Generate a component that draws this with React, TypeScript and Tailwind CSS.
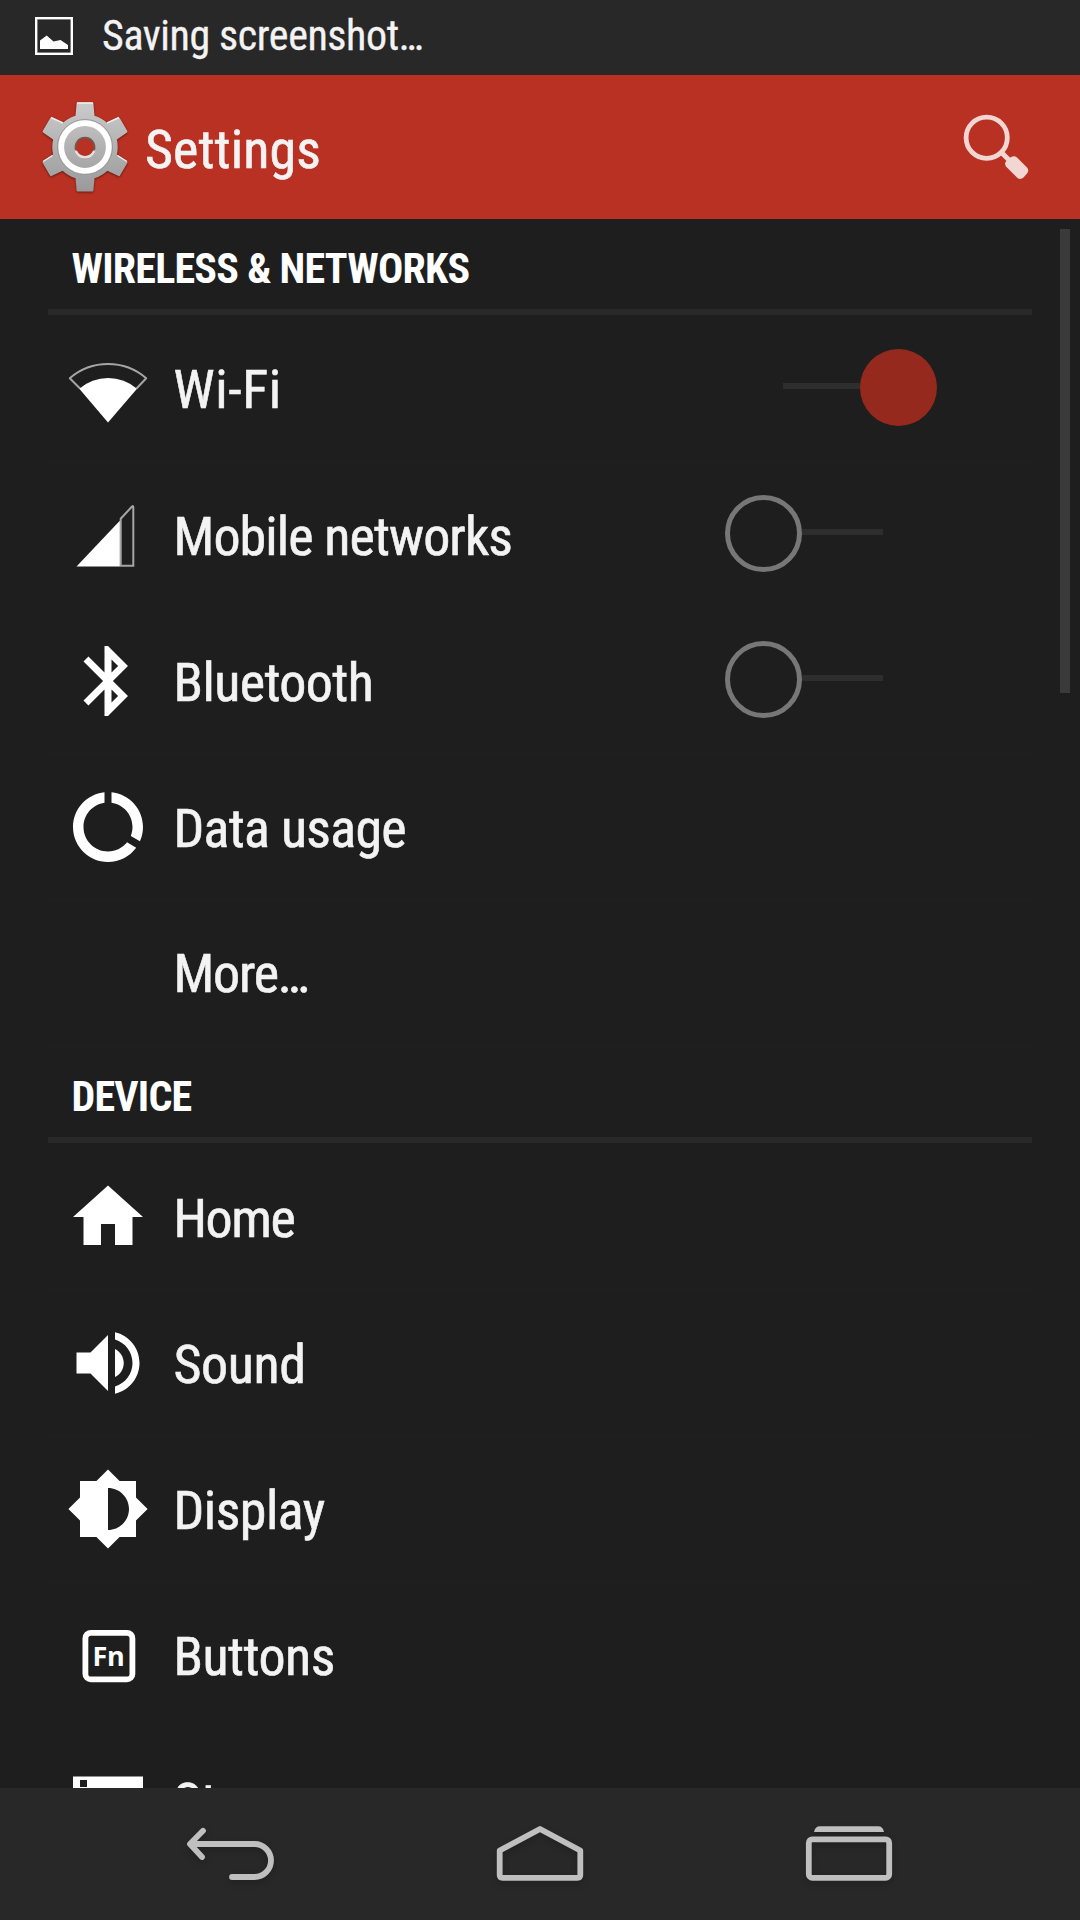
import type { ReactNode } from "react";

type Item = {
  label: string;
  className?: string;
  icon?: ReactNode;
  toggle?: "on" | "off";
};

const MaterialIcon = ({ d }: { d: string }) => (
  <svg viewBox="0 0 24 24" className="w-[84px] h-[84px]" fill="#fff">
    <path d={d} />
  </svg>
);

const WifiIcon = () => (
  <svg viewBox="0 0 84 84" className="w-[84px] h-[84px]">
    <path d="M14 41.5 L3.8 31.3 A58.5 58.5 0 0 1 80.2 31.3 L70.5 41.5" fill="none" stroke="#a5a5a5" strokeWidth="2" strokeLinejoin="round" />
    <path d="M42 75.5 L13.3 41.7 A44 44 0 0 1 71 41.7 Z" fill="#fff" />
  </svg>
);

const SignalIcon = () => (
  <svg viewBox="0 0 84 84" className="w-[84px] h-[84px]">
    <path d="M54.7 72.7 V25.7 L66 13.5 Q67.3 12.5 67.3 14 V72.7 Z" fill="none" stroke="#a5a5a5" strokeWidth="2" />
    <path d="M10.5 73.5 L53.8 27.8 V73.5 Z" fill="#fff" />
  </svg>
);

const FnIcon = () => (
  <svg viewBox="0 0 84 84" className="w-[84px] h-[84px]">
    <rect x="19.4" y="19.8" width="47" height="46.6" rx="5.5" fill="none" stroke="#fff" strokeWidth="5.8" />
    <text x="26.6" y="53" fill="#fff" className="font-['Open_Sans',sans-serif] font-bold font-stretch-normal text-[27px] tracking-[-0.5px]">Fn</text>
  </svg>
);

const wireless: Item[] = [
  { label: "Wi-Fi", icon: <WifiIcon />, toggle: "on", className: "mt-[41px] tracking-[0.6px]" },
  { label: "Mobile networks", icon: <SignalIcon />, toggle: "off", className: "mt-[42px] tracking-[-0.9px]" },
  {
    label: "Bluetooth",
    icon: <MaterialIcon d="M17.71 7.71L12 2h-1v7.59L6.41 5 5 6.41 10.59 12 5 17.59 6.41 19 11 14.41V22h1l5.71-5.71-4.3-4.29 4.3-4.29zM13 5.83l1.88 1.88L13 9.59V5.83zm1.88 10.46L13 18.17v-3.76l1.88 1.88z" />,
    toggle: "off",
    className: "mt-[42px] tracking-[-0.6px]",
  },
  {
    label: "Data usage",
    icon: <MaterialIcon d="M13 2.05v3.03c3.39.49 6 3.39 6 6.92 0 .9-.18 1.75-.48 2.54l2.6 1.53c.56-1.24.88-2.62.88-4.07 0-5.18-3.95-9.45-9-9.95zM12 19c-3.87 0-7-3.13-7-7 0-3.53 2.61-6.43 6-6.92V2.05c-5.06.5-9 4.76-9 9.95 0 5.52 4.47 10 9.99 10 3.31 0 6.24-1.61 8.06-4.09l-2.6-1.53C16.17 17.98 14.21 19 12 19z" />,
    className: "mt-[42px] tracking-[-0.7px]",
  },
  { label: "More…", className: "mt-[41px] tracking-[-1.2px]" },
];

const device: Item[] = [
  { label: "Home", icon: <MaterialIcon d="M10 20v-6h4v6h5v-8h3L12 3 2 12h3v8z" />, className: "mt-[42px] tracking-[-1.4px]" },
  {
    label: "Sound",
    icon: <MaterialIcon d="M3 9v6h4l5 5V4L7 9H3zm13.5 3c0-1.77-1.02-3.29-2.5-4.03v8.05c1.48-.73 2.5-2.25 2.5-4.02zM14 3.23v2.06c2.89.86 5 3.54 5 6.71s-2.11 5.85-5 6.71v2.06c4.01-.91 7-4.49 7-8.77s-2.99-7.86-7-8.77z" />,
    className: "mt-[42px] tracking-[-0.4px]",
  },
  {
    label: "Display",
    icon: <MaterialIcon d="M20 15.31L23.31 12 20 8.69V4h-4.69L12 .69 8.69 4H4v4.69L.69 12 4 15.31V20h4.69L12 23.31 15.31 20H20v-4.69zM12 18V6c3.31 0 6 2.69 6 6s-2.69 6-6 6z" />,
    className: "mt-[42px] tracking-[-0.5px]",
  },
  { label: "Buttons", icon: <FnIcon />, className: "mt-[42px] tracking-[-0.5px]" },
  {
    label: "Storage",
    icon: <MaterialIcon d="M2 21h20v-4H2v4zm2-3h2v2H4v-2zM2 5v4h20V5H2zm4 3H4V6h2v2zm-4 7h20v-4H2v4zm2-3h2v2H4v-2z" />,
    className: "mt-[42px] tracking-[-0.5px]",
  },
];

const Toggle = ({ state }: { state: "on" | "off" }) =>
  state === "on" ? (
    <div className="flex items-start mt-8 mr-[95px]">
      <div className="w-[77px] h-1.5 mt-[34px] bg-[#2e2e2e]" />
      <div className="w-[77px] h-[77px] rounded-full bg-[#96291d]" />
    </div>
  ) : (
    <div className="flex items-start mt-8 mr-[149px]">
      <div className="w-[77px] h-[77px] rounded-full border-[5px] border-[#777777]" />
      <div className="w-[81px] h-1.5 mt-[34px] bg-[#2e2e2e]" />
    </div>
  );

const Row = ({ item }: { item: Item }) => (
  <div className="flex h-[146px] border-b-2 border-[#1f1f1f] pl-[18px]">
    <div className="w-[84px] mt-[30px] shrink-0">{item.icon}</div>
    <span className={`flex-1 ml-[23.5px] text-[54px] leading-[64px] text-[#f3f3f3] whitespace-nowrap [-webkit-text-stroke:0.6px_#f3f3f3] ${item.className ?? ""}`}>
      {item.label}
    </span>
    {item.toggle && <Toggle state={item.toggle} />}
  </div>
);

const Section = ({ title, items }: { title: string; items: Item[] }) => (
  <section className="mx-12">
    <div className="h-[98px] pb-0.5">
      <h2 className="h-full border-b-[6px] border-[#292929] pl-[23.5px] pt-[25px] text-[42px] leading-[50px] font-bold tracking-[-0.75px] text-white">{title}</h2>
    </div>
    {items.map((item) => (
      <Row key={item.label} item={item} />
    ))}
  </section>
);

const GearIcon = () => (
  <svg viewBox="-45 -48 90 96" className="w-[90px] h-24">
    <defs>
      <linearGradient id="metal" gradientUnits="userSpaceOnUse" x1="0" y1="-45" x2="0" y2="45">
        <stop offset="0" stopColor="#cbcbcb" />
        <stop offset="1" stopColor="#999999" />
      </linearGradient>
      <mask id="hole">
        <rect x="-48" y="-48" width="96" height="96" fill="#fff" />
        <circle r="9.5" fill="#000" />
      </mask>
      <clipPath id="teeth">
        {[0, 60, 120, 180, 240, 300].map((a) => (
          <path key={a} transform={`rotate(${a})`} d="M-9.6 -30 L-8.4 -43.6 Q-8.3 -44.6 -7.3 -44.6 H7.3 Q8.3 -44.6 8.4 -43.6 L9.6 -30 V0 H-9.6 Z" />
        ))}
        <circle r="32.7" />
      </clipPath>
    </defs>
    <g mask="url(#hole)" style={{ filter: "drop-shadow(0 1px 1px rgba(0,0,0,.45))" }}>
      <rect x="-48" y="-48" width="96" height="96" fill="url(#metal)" clipPath="url(#teeth)" />
      <g stroke="#f2f2f2" strokeWidth="1.4" fill="none">
        <path d="M-8 -44 H8 M-34 -29.5 L-22 -24 M22 -24 L34 -29.5 M-42 14.5 L-32.5 8.5 M32.5 8.5 L42 14.5" />
      </g>
      <circle r="27.5" fill="none" stroke="#999" strokeWidth="1" />
      <circle r="23.8" fill="none" stroke="#fff" strokeWidth="5.8" />
    </g>
    <path d="M-9.2 4 A10 10 0 0 0 9.2 4" fill="none" stroke="#e2e2e2" strokeWidth="2.4" />
    <path d="M-9.2 3 A9.6 9.6 0 1 1 9.2 3" fill="none" stroke="#6b5a55" strokeWidth="1.6" />
  </svg>
);

const SearchIcon = () => (
  <svg viewBox="0 0 72 72" className="w-[72px] h-[72px]">
    <circle cx="26.7" cy="26.7" r="20.6" fill="none" stroke="#f1d6d3" strokeWidth="4.8" />
    <path d="M41 41 L50 50" stroke="#f1d6d3" strokeWidth="5" />
    <path d="M45.5 51 L51 46 Q54.5 44.5 57 46.5 L67 56.5 Q69.5 59.5 67 62.5 L63.5 66.5 Q60.5 69 57.5 67 L46 55.5 Q44.5 53 45.5 51 Z" fill="#f1d6d3" />
  </svg>
);

const NavIcon = ({ children }: { children: ReactNode }) => (
  <svg
    viewBox="0 0 96 66"
    className="w-24 h-[66px] drop-shadow-[0_3px_3px_rgba(0,0,0,0.2)]"
    fill="none"
    stroke="#bfbfbf"
    strokeWidth="5.8"
    strokeLinecap="round"
    strokeLinejoin="round"
  >
    {children}
  </svg>
);

const NavBar = () => (
  <nav className="h-[132px] shrink-0 bg-[#282828] flex items-center justify-center gap-[213px]">
    <NavIcon>
      <path d="M8 23 H71.5 A16.5 16.5 0 0 1 71.5 56 H49" />
      <path d="M20 9.8 L7 23 L19 36" />
    </NavIcon>
    <NavIcon>
      <path d="M7.7 29.5 L48 8 L88.3 29.5 V54 Q88.3 56.8 85.5 56.8 H10.5 Q7.7 56.8 7.7 54 Z" />
    </NavIcon>
    <NavIcon>
      <path d="M13 11 Q14 5.3 19 5.3 H77 Q82 5.3 83 11 Z" fill="#bfbfbf" stroke="none" />
      <rect x="7.8" y="18.4" width="80.4" height="38.4" rx="3.5" />
    </NavIcon>
  </nav>
);

const App = () => {
  return (
    <div className="w-[1080px] h-[1920px] flex flex-col overflow-hidden bg-[#1e1e1e] font-['Roboto_Condensed','Roboto',sans-serif] font-stretch-condensed">
      <div className="h-[75px] shrink-0 bg-[#282828] flex">
        <svg viewBox="0 0 38 38" className="w-[38px] h-[38px] ml-[35px] mt-[17px]">
          <rect x="1.2" y="1.2" width="35.6" height="35.6" fill="none" stroke="#fff" strokeWidth="2.4" />
          <path d="M5 32 V23.5 L11.7 18.5 L18.5 24.5 L25.5 23 L33 28 V32 Z" fill="#fff" />
        </svg>
        <span className="ml-[29px] mt-[11px] text-[42px] leading-[50px] tracking-[-0.4px] text-[#f3f3f3] [-webkit-text-stroke:0.3px_#f3f3f3]">Saving screenshot…</span>
      </div>

      <header className="h-36 shrink-0 bg-[#b83122] flex">
        <div className="ml-10 mt-6">
          <GearIcon />
        </div>
        <h1 className="ml-[15px] mt-[43px] flex-1 text-[54px] leading-[64px] tracking-[0.1px] text-[#f3f3f3] [-webkit-text-stroke:0.6px_#f3f3f3]">Settings</h1>
        <div className="mt-9 mr-12">
          <SearchIcon />
        </div>
      </header>

      <main className="relative flex-1 min-h-0 overflow-hidden">
        <Section title="WIRELESS & NETWORKS" items={wireless} />
        <Section title="DEVICE" items={device} />
        {/* scroll thumb */}
        <div className="absolute right-2.5 top-2.5 w-2.5 h-[464px] bg-[#3a3a3a]" />
      </main>

      <NavBar />
    </div>
  );
};

export default App;
